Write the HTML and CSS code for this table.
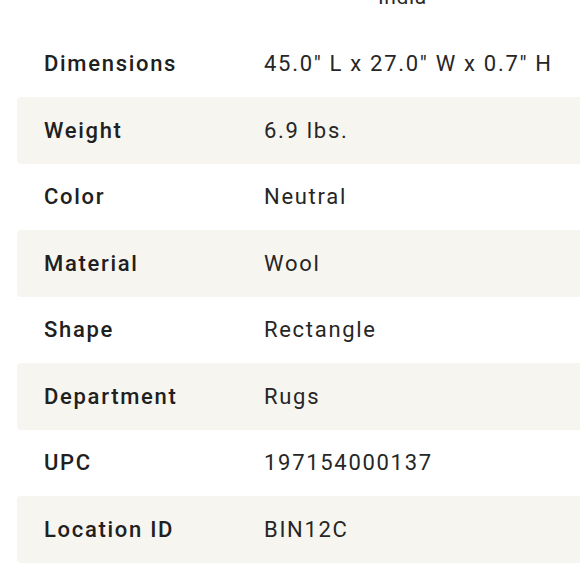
FILE: index.html
```html
<!DOCTYPE html>
<html lang="en">
<head>
<meta charset="utf-8">
<link rel="stylesheet" href="styles.css">
<title>Specifications</title>
</head>
<body>
<div class="specs">
  <div class="origin">India</div>
  <div class="row"><div class="label">Dimensions</div><div class="value">45.0" L x 27.0" W x 0.7" H</div></div>
  <div class="row alt"><div class="label">Weight</div><div class="value">6.9 lbs.</div></div>
  <div class="row"><div class="label">Color</div><div class="value">Neutral</div></div>
  <div class="row alt"><div class="label">Material</div><div class="value">Wool</div></div>
  <div class="row"><div class="label">Shape</div><div class="value">Rectangle</div></div>
  <div class="row alt"><div class="label">Department</div><div class="value">Rugs</div></div>
  <div class="row"><div class="label">UPC</div><div class="value">197154000137</div></div>
  <div class="row alt"><div class="label">Location ID</div><div class="value">BIN12C</div></div>
</div>
</body>
</html>
```
FILE: styles.css
```css
html, body {
  margin: 0;
  padding: 0;
  background: #ffffff;
  overflow: hidden;
}
body {
  width: 580px;
  height: 580px;
  font-family: Roboto, "Liberation Sans", sans-serif;
  color: #222222;
}
.specs {
  padding-left: 17px;
  width: 600px;
  display: flex;
  flex-direction: column;
}
.origin {
  margin-top: -16px;
  height: 26px;
  line-height: 26px;
  font-size: 21px;
  letter-spacing: 0.6px;
  padding-left: 361px;
  margin-bottom: 20.5px;
  color: #2a2a2a;
}
.row {
  display: grid;
  grid-template-columns: 220px 1fr;
  align-items: center;
  height: 66.5px;
  padding-left: 27px;
  border-radius: 4px;
  font-size: 22px;
  letter-spacing: 1.7px;
}
.row.alt {
  background: #f7f5f0;
}
.label {
  font-weight: 500;
  color: #202020;
}
.value {
  font-weight: 400;
  color: #262626;
}
```
